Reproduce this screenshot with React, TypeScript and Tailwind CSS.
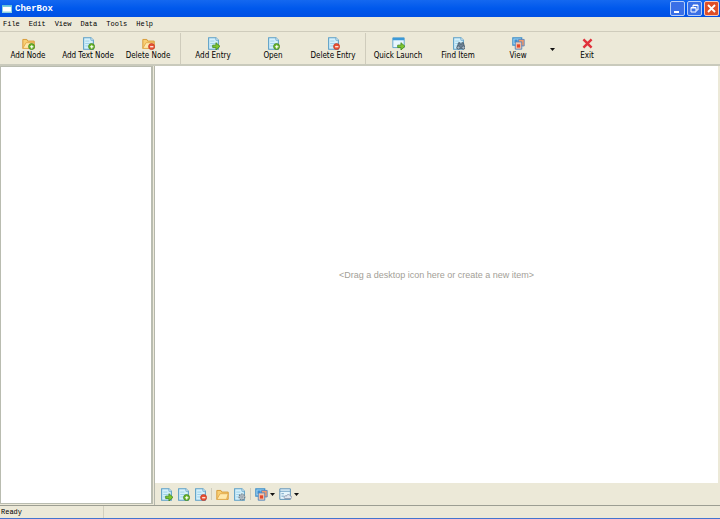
import React from 'react';

const Sheet = () => (
  <>
    <path d="M2 1h9l3 3v11H2z" fill="#d4f0fb" stroke="#5b9fc6" strokeWidth="1.3" />
    <path d="M11 1v3h3" fill="#fff" stroke="#5b9fc6" />
    <path d="M4 5h5M4 8h7M4 11h5" stroke="#93cbe5" />
  </>
);

const Folder = () => (
  <>
    <path d="M1 14V3h5l1 2h8v9z" fill="#f8cf74" stroke="#d89b39" strokeWidth="1.2" />
    <path d="M1 14l4-7h10l-2 7z" fill="#ffe9ac" stroke="#e0a548" />
  </>
);

const Badge = ({ minus = false }: { minus?: boolean }) => (
  <>
    <circle cx="11.8" cy="11.8" r="3.7" fill={minus ? '#e95332' : '#6db82c'} stroke={minus ? '#c23b2b' : '#42851f'} />
    <path d={minus ? 'M10 12h4' : 'M10 12h4M12 10v4'} stroke="#fff" strokeWidth="1.4" />
  </>
);

const Arrow = () => (
  <path d="M7 10h4V7l5 4.5-5 4.5v-3H7z" fill="#7dc52e" stroke="#43891c" />
);

type IconName =
  | 'folderAdd' | 'folderDelete' | 'folder' | 'sheetAdd' | 'sheetDelete' | 'sheetArrow'
  | 'launch' | 'find' | 'gear' | 'view' | 'list' | 'exit';

const icons: Record<IconName, React.ReactNode> = {
  folderAdd: <><Folder /><Badge /></>,
  folderDelete: <><Folder /><Badge minus /></>,
  folder: <Folder />,
  sheetAdd: <><Sheet /><Badge /></>,
  sheetDelete: <><Sheet /><Badge minus /></>,
  sheetArrow: <><Sheet /><Arrow /></>,
  launch: (
    <>
      <path d="M1 1h14v12H1z" fill="#e8f6fd" stroke="#4d9ac8" />
      <path d="M1 1h14v3H1z" fill="#3c9ad8" />
      <Arrow />
    </>
  ),
  find: (
    <>
      <Sheet />
      <path d="M6 14l2-7h2v2h2V7h2l2 7z" fill="#6f8496" stroke="#475b6d" />
      <circle cx="8" cy="13" r="2" fill="#a9b9c5" stroke="#475b6d" />
      <circle cx="14" cy="13" r="2" fill="#a9b9c5" stroke="#475b6d" />
    </>
  ),
  gear: (
    <>
      <Sheet />
      <circle cx="11" cy="11" r="3.5" fill="#c5ced4" stroke="#71818d" strokeWidth="1.6" strokeDasharray="2 1" />
      <circle cx="11" cy="11" r="1.3" fill="#fff" stroke="#71818d" />
    </>
  ),
  view: (
    <>
      <path d="M1 1h11v9H1z" fill="#a9dcf7" stroke="#3f8fc9" strokeWidth="1.4" />
      <path d="M3 3h4v4H3z" fill="#3f8fd0" />
      <path d="M8 3h7v8H8z" fill="#f49a6b" stroke="#4f83c2" />
      <path d="M4 6h8v9H4z" fill="#f7c4ac" stroke="#3f7fc0" />
      <path d="M6 9h4v4H6z" fill="#e3492c" />
    </>
  ),
  list: (
    <>
      <path d="M1 1h13v13H1z" fill="#e6f5fc" stroke="#5b91b7" strokeWidth="1.2" />
      <path d="M1 4h13M3 7h3M3 10h3" stroke="#5b91b7" />
      <path d="M7 13c-2-3 1-4 2-3 1-3 5-2 5 0 3 0 2 3 0 3z" fill="#dfe6ef" stroke="#7f8ca5" />
    </>
  ),
  exit: <path d="M3 3l10 10M13 3L3 13" stroke="#e0313a" strokeWidth="3" />,
};

const Icon = ({ name }: { name: IconName }) => (
  <svg viewBox="0 0 16 16" className="size-[13px] shrink-0" fill="none" aria-hidden="true">
    {icons[name]}
  </svg>
);

const ToolButton = ({ icon, label }: { icon: IconName; label: string }) => (
  <button className="flex w-14 flex-col items-center gap-px whitespace-nowrap text-[8px] leading-[10px] text-black">
    <Icon name={icon} />
    {label}
  </button>
);

const SmallButton = ({ icon, label }: { icon: IconName; label: string }) => (
  <button aria-label={label}>
    <Icon name={icon} />
  </button>
);

const DropButton = ({ label }: { label: string }) => (
  <button aria-label={label} className="flex w-[5px] items-center">
    <svg viewBox="0 0 5 3" className="h-[3px] w-[5px]">
      <path d="M0 0h5L2.5 3z" fill="#111" />
    </svg>
  </button>
);

const Separator = () => <div className="w-px self-stretch bg-[#cfccbc]" />;

const menus = ['File', 'Edit', 'View', 'Data', 'Tools', 'Help'];

const TitleBar = () => (
  <header className="flex h-[17px] items-center bg-linear-to-b from-[#1468f0] via-[#0058ec] to-[#0050e4] pr-px pl-0.5">
    <svg viewBox="0 0 20 20" className="size-2.5" aria-hidden="true">
      <path d="M0 2h20v16H0z" fill="#8fd3e0" />
      <path d="M2 6h16v9H2z" fill="#fff" />
      <path d="M0 2h20v3H0z" fill="#62c1d8" />
    </svg>
    <h1 className="ml-[3px] flex-1 font-['Liberation_Mono',monospace] text-[9px] leading-3 font-bold text-white">CherBox</h1>
    <div className="flex gap-0.5">
      <button aria-label="Minimize" className="size-[15px] rounded-xs border border-[#b5cdf8] bg-[#3a6fe6]">
        <svg viewBox="0 0 13 13"><path d="M3 9h5v2H3z" fill="#fff" /></svg>
      </button>
      <button aria-label="Restore" className="size-[15px] rounded-xs border border-[#b5cdf8] bg-[#3a6fe6]">
        <svg viewBox="0 0 13 13" fill="none" stroke="#fff">
          <path d="M5 5V3h5v5H8M5 3.5h5M3 5.5h5V10H3zM3 6h5" />
        </svg>
      </button>
      <button aria-label="Close" className="size-[15px] rounded-xs border border-[#f3c8bd] bg-[#df4f28]">
        <svg viewBox="0 0 13 13"><path d="M3 3l7 7M10 3l-7 7" stroke="#fff" strokeWidth="1.8" /></svg>
      </button>
    </div>
  </header>
);

export default function App() {
  return (
    <div className="flex h-screen flex-col bg-[#ece9d8] font-['DejaVu_Sans_Condensed','DejaVu_Sans',sans-serif]">
      <TitleBar />
      <nav className="flex h-[14px] items-center gap-[9px] pl-[3px] font-['Liberation_Mono',monospace] text-[7px] leading-[10px] text-black">
        {menus.map((menu) => (
          <button key={menu}>{menu}</button>
        ))}
      </nav>
      <div className="flex gap-1 border-t border-b-2 border-t-[#cfccbc] border-b-[#c9cabc] pt-px">
        <div className="flex gap-1 pt-1 pb-[3px]">
          <ToolButton icon="folderAdd" label="Add Node" />
          <ToolButton icon="sheetAdd" label="Add Text Node" />
          <ToolButton icon="folderDelete" label="Delete Node" />
        </div>
        <Separator />
        <div className="flex gap-1 pt-1 pb-[3px]">
          <ToolButton icon="sheetArrow" label="Add Entry" />
          <ToolButton icon="sheetAdd" label="Open" />
          <ToolButton icon="sheetDelete" label="Delete Entry" />
        </div>
        <Separator />
        <div className="flex gap-1 pt-1 pb-[3px]">
          <ToolButton icon="launch" label="Quick Launch" />
          <ToolButton icon="find" label="Find Item" />
          <ToolButton icon="view" label="View" />
          <DropButton label="View options" />
          <ToolButton icon="exit" label="Exit" />
        </div>
      </div>
      <div className="flex min-h-0 flex-1 pr-0.5">
        <aside className="mb-px w-[153px] border border-r-2 border-[#b9bcb0] bg-white" />
        <main className="ml-px flex flex-1 flex-col border-l border-[#b4b7ac]">
          <div className="flex flex-1 items-center justify-center bg-white font-['Liberation_Sans',sans-serif] text-[9px] leading-3 text-[#a3a097]">
            &lt;Drag a desktop icon here or create a new item&gt;
          </div>
          <div className="flex h-[22px] items-center gap-1 pl-[5px]">
            <SmallButton icon="sheetArrow" label="Add entry" />
            <SmallButton icon="sheetAdd" label="New entry" />
            <SmallButton icon="sheetDelete" label="Delete entry" />
            <div className="h-3 w-px bg-[#cfccbc]" />
            <SmallButton icon="folder" label="Open folder" />
            <SmallButton icon="gear" label="Properties" />
            <div className="h-3 w-px bg-[#cfccbc]" />
            <div className="flex items-center gap-0.5">
              <SmallButton icon="view" label="View mode" />
              <DropButton label="View modes" />
            </div>
            <div className="flex items-center gap-0.5">
              <SmallButton icon="list" label="Layout" />
              <DropButton label="Layouts" />
            </div>
          </div>
        </main>
      </div>
      <footer className="flex h-[14px] items-stretch border-t border-b border-t-[#9c9e93] border-b-[#4474d0] font-['Liberation_Mono',monospace] text-[7px] leading-3 text-black">
        <span className="w-[104px] border-r border-[#d2cfbe] pl-px">Ready</span>
      </footer>
    </div>
  );
}
